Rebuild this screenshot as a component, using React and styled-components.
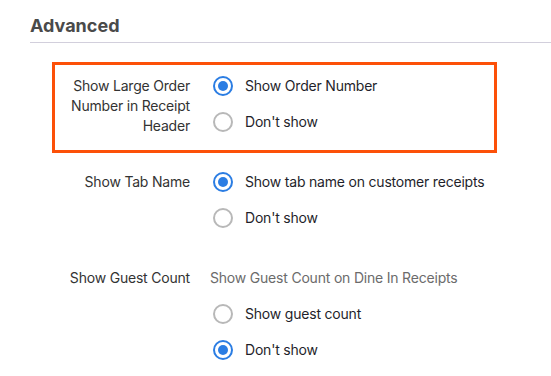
import React from 'react';
import styled, {createGlobalStyle} from 'styled-components';

const GlobalStyle = createGlobalStyle`
    body{
        margin:0;
        background:#fff;
        font-family:Inter, "Liberation Sans", sans-serif;
        font-size:14px;
        color:#2b2b2b;
    }
`

const Page = styled.div`
    padding:14px 0 0 30px;
`

const Title = styled.h2`
    margin:0;
    font-size:18px;
    line-height:24px;
    font-weight:700;
    color:#4a4a4a;
    padding-bottom:4px;
    border-bottom:1px solid #d2cfdc;
`

const Rows = styled.div`
    display:flex;
    flex-direction:column;
    gap:5px;
    margin:19px 0 0 22px;
`

const Row = styled.div`
    width:445px;
    box-sizing:border-box;
    display:flex;
    gap:23px;
    padding:11px 0 2px;
    border:3px solid ${p => p.highlight ? '#fc5008' : 'transparent'};
    letter-spacing:-0.2px;
`

const Label = styled.div`
    width:135px;
    flex:none;
    text-align:right;
    line-height:20px;
    color:#333;
`

const Options = styled.div`
    display:flex;
    flex-direction:column;
`

const Description = styled.div`
    line-height:20px;
    color:#6b6b6b;
    margin:0 0 16px -3px;
`

const Option = styled.label`
    display:flex;
    align-items:center;
    gap:12px;
    height:20px;
    margin-bottom:16px;
    color:#1f1f2b;
    line-height:20px;
`

const Radio = styled.span`
    width:20px;
    height:20px;
    box-sizing:border-box;
    border-radius:50%;
    border:2px solid ${p => p.checked ? '#2b7de3' : '#b8b8b8'};
    display:flex;
    align-items:center;
    justify-content:center;
    &::after{
        content:'';
        width:10px;
        height:10px;
        border-radius:50%;
        background:${p => p.checked ? '#2b7de3' : 'transparent'};
    }
`

const settings = [
    {
        label: 'Show Large Order Number in Receipt Header',
        highlight: true,
        options: ['Show Order Number', "Don't show"],
        selected: 0,
    },
    {
        label: 'Show Tab Name',
        options: ['Show tab name on customer receipts', "Don't show"],
        selected: 0,
    },
    {
        label: 'Show Guest Count',
        description: 'Show Guest Count on Dine In Receipts',
        options: ['Show guest count', "Don't show"],
        selected: 1,
    },
]

const App = () => {
    return (
        <Page>
            <GlobalStyle />
            <Title>Advanced</Title>
            <Rows>
                {settings.map(s => (
                    <Row key={s.label} highlight={s.highlight}>
                        <Label>{s.label}</Label>
                        <Options>
                            {s.description && <Description>{s.description}</Description>}
                            {s.options.map((o, i) => (
                                <Option key={o}>
                                    <Radio checked={i === s.selected} />
                                    {o}
                                </Option>
                            ))}
                        </Options>
                    </Row>
                ))}
            </Rows>
        </Page>
    )
}

export default App;
